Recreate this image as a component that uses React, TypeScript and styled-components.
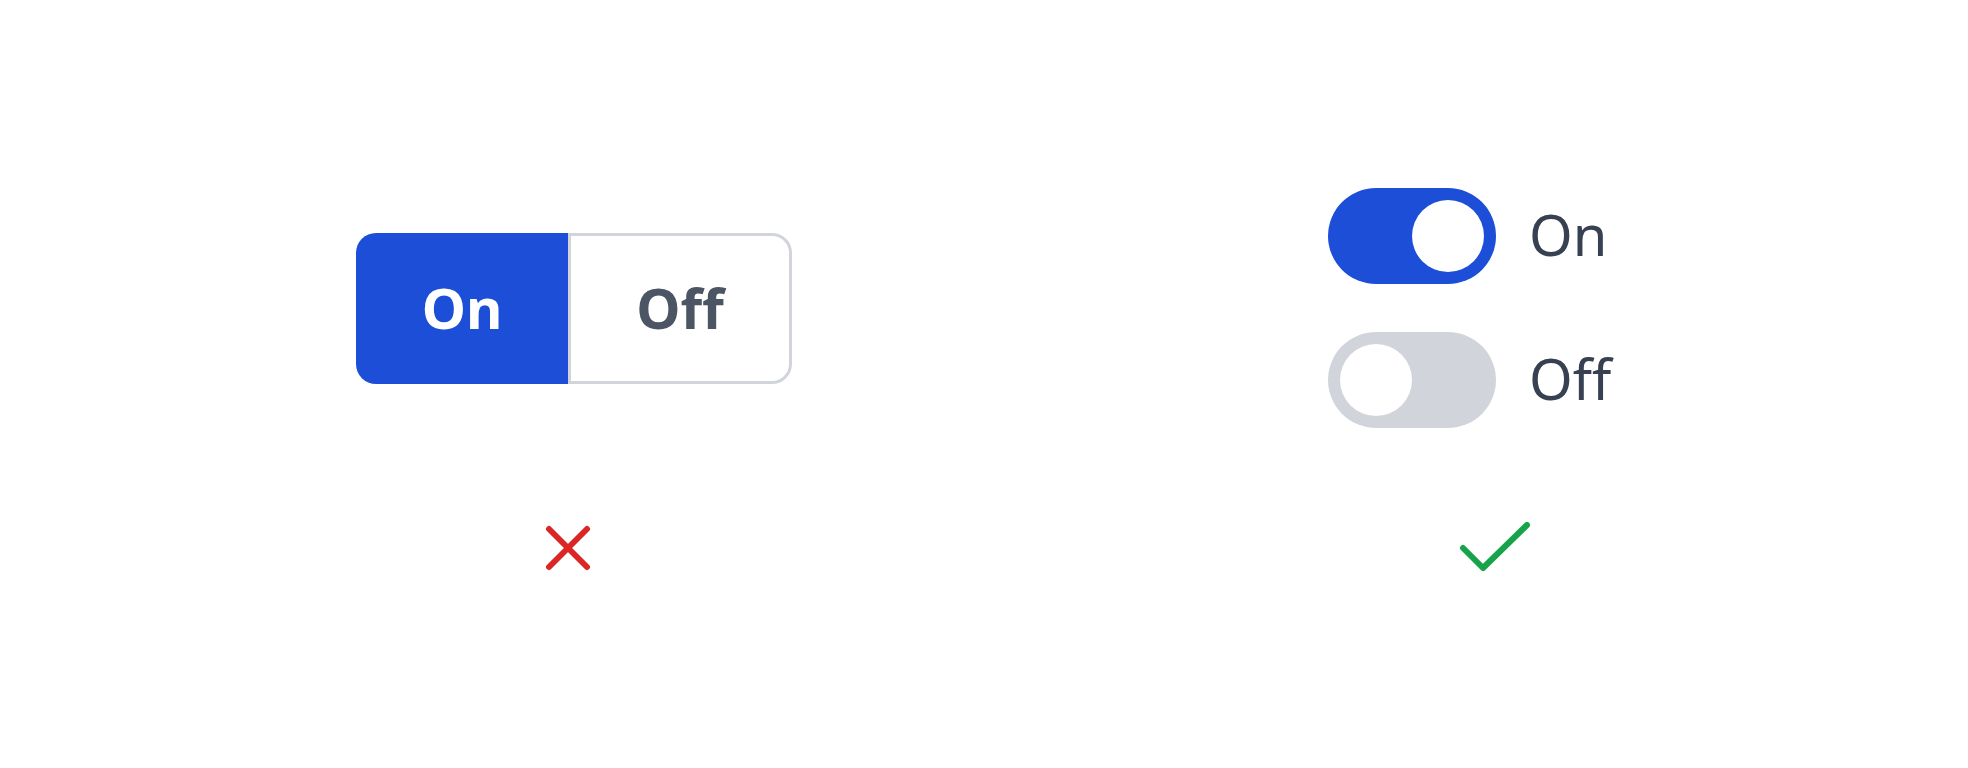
import React from "react";
import styled, { createGlobalStyle } from "styled-components";

const Global = createGlobalStyle`
  html, body { margin: 0; padding: 0; background: #ffffff; }
  body { font-family: "Noto Sans", "Open Sans", sans-serif; }
`;

const Page = styled.div`
  width: 1968px;
  height: 768px;
  box-sizing: border-box;
  padding: 188px 0 0 109px;
  display: grid;
  grid-template-columns: 924px 924px;
  align-items: start;
`;

const Column = styled.div`
  display: flex;
  flex-direction: column;
  align-items: center;
  gap: 96px;
`;

const DemoArea = styled.div`
  height: 240px;
  display: flex;
  align-items: center;
  justify-content: center;
`;

const Segmented = styled.div`
  display: flex;
  height: 151px;
  margin-left: 6px;
`;

const SegButton = styled.button<{ $active?: boolean; $side: "left" | "right" }>`
  box-sizing: border-box;
  height: 151px;
  width: ${(p) => (p.$side === "left" ? 212 : 224)}px;
  margin: 0;
  padding: 0 0 2px;
  font-family: "Noto Sans", "Open Sans", sans-serif;
  font-weight: 700;
  font-size: 56px;
  line-height: 1;
  display: flex;
  align-items: center;
  justify-content: center;
  cursor: pointer;
  background: ${(p) => (p.$active ? "#1d4ed8" : "#ffffff")};
  color: ${(p) => (p.$active ? "#ffffff" : "#4b5563")};
  border: ${(p) => (p.$active ? "none" : "3px solid #d1d5db")};
  border-radius: ${(p) => (p.$side === "left" ? "20px 0 0 20px" : "0 20px 20px 0")};
`;

const ToggleList = styled.div`
  display: flex;
  flex-direction: column;
  gap: 48px;
`;

const ToggleRow = styled.label`
  display: flex;
  align-items: center;
  gap: 33px;
`;

const Track = styled.span<{ $on: boolean }>`
  box-sizing: border-box;
  width: 168px;
  height: 96px;
  border-radius: 48px;
  padding: 12px;
  display: flex;
  justify-content: ${(p) => (p.$on ? "flex-end" : "flex-start")};
  background: ${(p) => (p.$on ? "#1d4ed8" : "#d1d5db")};
`;

const Knob = styled.span`
  width: 72px;
  height: 72px;
  border-radius: 50%;
  background: #ffffff;
`;

const ToggleLabel = styled.span`
  min-width: 133px;
  padding-bottom: 4px;
  font-family: "Noto Sans", "Open Sans", sans-serif;
  font-weight: 400;
  font-size: 56px;
  line-height: 1;
  color: #374151;
`;

const IconSlot = styled.div<{ $shift: number }>`
  height: 48px;
  display: flex;
  align-items: center;
  margin-left: ${(p) => p.$shift}px;
`;

const CrossIcon = () => (
  <svg width="46" height="46" viewBox="0 0 46 46" fill="none">
    <path d="M4 4 L42 42 M42 4 L4 42" stroke="#dc2626" strokeWidth="6" strokeLinecap="round" />
  </svg>
);

const CheckIcon = () => (
  <svg width="72" height="52" viewBox="0 0 72 52" fill="none">
    <path d="M4 26 L24 46 L68 3" stroke="#16a34a" strokeWidth="6" strokeLinecap="round" strokeLinejoin="round" />
  </svg>
);

export default function App() {
  return (
    <>
      <Global />
      <Page>
        <Column>
          <DemoArea>
            <Segmented>
              <SegButton $active $side="left">On</SegButton>
              <SegButton $side="right">Off</SegButton>
            </Segmented>
          </DemoArea>
          <IconSlot $shift={-6}>
            <CrossIcon />
          </IconSlot>
        </Column>
        <Column>
          <DemoArea>
            <ToggleList>
              <ToggleRow>
                <Track $on>
                  <Knob />
                </Track>
                <ToggleLabel>On</ToggleLabel>
              </ToggleRow>
              <ToggleRow>
                <Track $on={false}>
                  <Knob />
                </Track>
                <ToggleLabel>Off</ToggleLabel>
              </ToggleRow>
            </ToggleList>
          </DemoArea>
          <IconSlot $shift={0}>
            <CheckIcon />
          </IconSlot>
        </Column>
      </Page>
    </>
  );
}
